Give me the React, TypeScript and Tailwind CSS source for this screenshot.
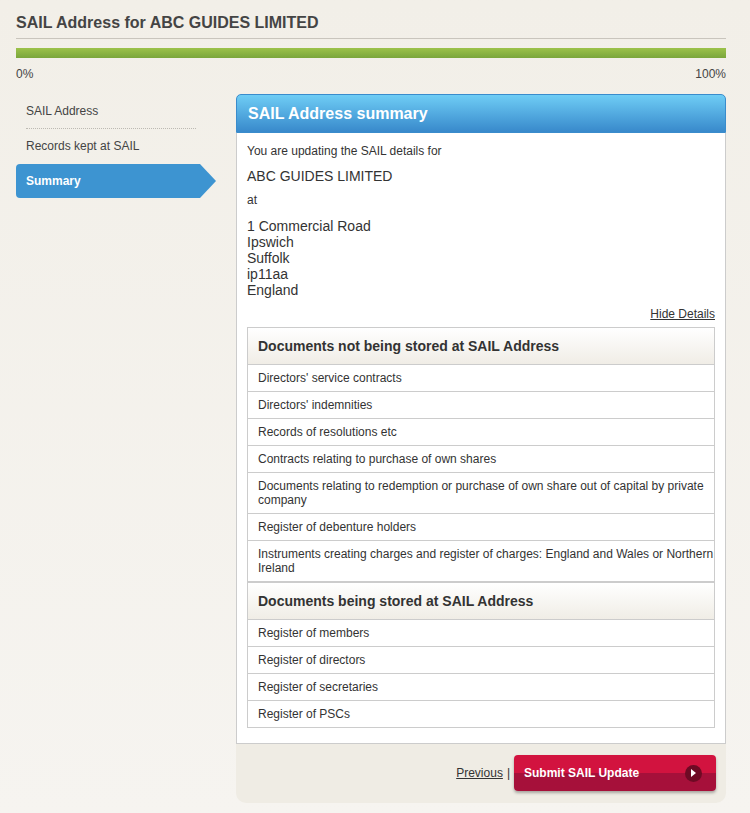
import React from "react";

const notStored = [
  "Directors' service contracts",
  "Directors' indemnities",
  "Records of resolutions etc",
  "Contracts relating to purchase of own shares",
  "Documents relating to redemption or purchase of own share out of capital by private company",
  "Register of debenture holders",
  "Instruments creating charges and register of charges: England and Wales or Northern Ireland",
];

const stored = [
  "Register of members",
  "Register of directors",
  "Register of secretaries",
  "Register of PSCs",
];

function Row({ text }: { text: string }) {
  return (
    <div className="border-b border-[#cccccc] pl-[10px] pr-[0px] py-[6px] text-[12px] leading-[14px] text-[#333]">
      {text}
    </div>
  );
}

function Head({ text, first }: { text: string; first?: boolean }) {
  return (
    <div
      className={`${first ? "" : "border-t border-[#cccccc]"} border-b border-[#cccccc] bg-gradient-to-b from-[#ffffff] to-[#f0ede6] px-[10px] pt-[10px] pb-[10px] text-[14px] font-bold leading-[16px] text-[#333]`}
    >
      {text}
    </div>
  );
}

export default function App() {
  return (
    <div
      className="min-h-[813px] w-[750px] bg-gradient-to-b from-[#f2efe8] to-[#f6f4f0] text-[#333]"
      style={{ fontFamily: '"Liberation Sans", Arial, sans-serif' }}
    >
      <div className="px-[16px] pr-[24px]">
        <div className="border-b border-[#c9c5bd] pt-[13px] pb-[6px] text-[16px] font-bold leading-[19px] text-[#444]">
          SAIL Address for ABC GUIDES LIMITED
        </div>
        <div className="mt-[9px] h-[10px] bg-gradient-to-b from-[#9cc24a] to-[#7aa63b]" />
        <div className="mt-[9px] flex justify-between text-[12px] leading-[14px] text-[#444]">
          <span>0%</span>
          <span>100%</span>
        </div>

        <div className="mt-[13px] flex">
          {/* left nav */}
          <div className="w-[220px] shrink-0">
            <div className="ml-[10px] w-[170px] border-b border-dotted border-[#bdbab3] pt-[10px] pb-[10px] text-[12px] leading-[14px] text-[#444]">
              SAIL Address
            </div>
            <div className="py-[10px] pl-[10px] text-[12px] leading-[14px] text-[#444]">
              Records kept at SAIL
            </div>
            <div className="relative mt-[1px] h-[34px] w-[184px]">
              <div className="flex h-full items-center rounded-l-[4px] bg-[#3d94d1] pl-[10px] text-[12px] font-bold text-white">
                Summary
              </div>
              <div className="absolute top-0 right-[-16px] h-0 w-0 border-y-[17px] border-l-[16px] border-y-transparent border-l-[#3d94d1]" />
            </div>
          </div>

          {/* main panel */}
          <div className="w-[490px]">
            <div className="flex h-[39px] items-center rounded-t-[5px] border border-[#3a8ccc] bg-gradient-to-b from-[#6fcdf5] to-[#3889cb] pl-[11px] text-[16px] font-bold text-white">
              SAIL Address summary
            </div>
            <div className="border-x border-b border-[#cccccc] bg-white px-[10px] pt-[11px] pb-[15px]">
              <p className="text-[12px] leading-[14px]">You are updating the SAIL details for</p>
              <p className="mt-[10px] text-[14px] leading-[16px]">ABC GUIDES LIMITED</p>
              <p className="mt-[9px] text-[12px] leading-[14px]">at</p>
              <div className="mt-[11px] text-[14px] leading-[16px]">
                <div>1 Commercial Road</div>
                <div>Ipswich</div>
                <div>Suffolk</div>
                <div>ip11aa</div>
                <div>England</div>
              </div>
              <div className="mt-[9px] text-right text-[12px] leading-[14px]">
                <a href="#" className="text-[#333] underline">Hide Details</a>
              </div>
              <div className="mt-[6px] border-x border-t border-[#cccccc]">
                <Head text="Documents not being stored at SAIL Address" first />
                {notStored.map((t) => (
                  <Row key={t} text={t} />
                ))}
                <Head text="Documents being stored at SAIL Address" />
                {stored.map((t) => (
                  <Row key={t} text={t} />
                ))}
              </div>
            </div>
            <div className="flex items-center justify-end rounded-b-[10px] bg-[#efece4] px-[10px] pt-[11px] pb-[12px]">
              <a href="#" className="text-[12px] text-[#333] underline">Previous</a>
              <span className="ml-[4px] mr-[4px] text-[12px] text-[#333]">|</span>
              <button className="flex h-[36px] w-[202px] items-center justify-between rounded-[4px] bg-gradient-to-b from-[#d2133f] from-50% to-[#a6103a] to-50% pl-[10px] pr-[14px] text-[12px] font-bold text-white shadow-[0_2px_3px_rgba(0,0,0,0.3)]">
                <span>Submit SAIL Update</span>
                <span className="flex h-[17px] w-[17px] items-center justify-center rounded-full bg-[#6e0a24]">
                  <svg width="7" height="8" viewBox="0 0 7 8">
                    <path d="M1 0 L6 4 L1 8 Z" fill="#fff" />
                  </svg>
                </span>
              </button>
            </div>
          </div>
        </div>
      </div>
    </div>
  );
}
